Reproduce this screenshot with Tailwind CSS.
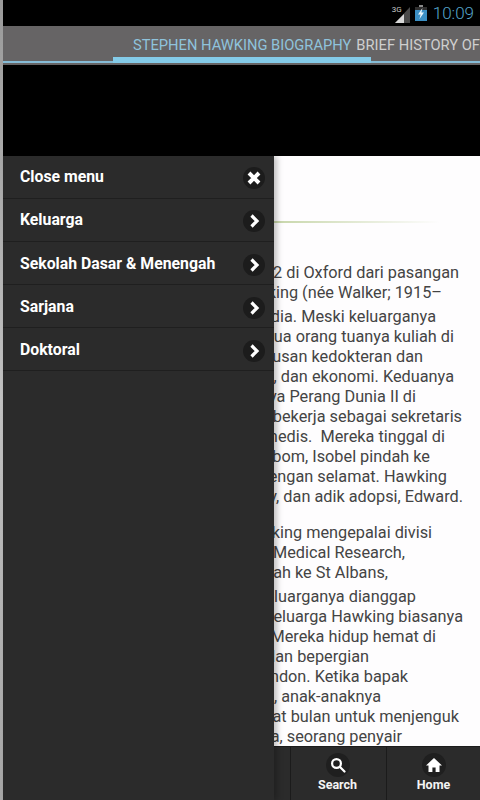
<!DOCTYPE html>
<html lang="en">
<head>
    <meta charset="UTF-8">
    <meta name="viewport" content="width=device-width, initial-scale=1.0">
    <title>Stephen Hawking Biography</title>
    <script src="https://cdn.jsdelivr.net/npm/@tailwindcss/browser@4"></script>
</head>
<body class="bg-black">
    <div class="relative flex h-[800px] w-[480px] overflow-hidden font-['Roboto',sans-serif]">
        <div class="w-[3px] shrink-0 bg-linear-to-b from-[#9a9a9a] via-[#c4c4c4] to-[#a8a8a8]"></div>

        <div class="flex min-w-0 flex-1 flex-col">
            <!-- status bar -->
            <div class="flex h-[26px] shrink-0 items-center justify-end bg-black pr-[6px]">
                <div class="relative mr-[5px] h-[20px] w-[18px]">
                    <span class="absolute left-0 top-[3px] text-[8px] leading-[8px] text-[#c8c8c8]">3G</span>
                    <svg class="absolute bottom-0 right-0" width="18" height="18" viewBox="0 0 18 18">
                        <path d="M18 2 L18 18 L3 18 Z" fill="#4a4a4a"/>
                        <path d="M12 9 L12 18 L3 18 Z" fill="#d8d8d8"/>
                    </svg>
                </div>
                <svg class="mr-[6px]" width="12" height="16" viewBox="0 0 12 16">
                    <rect x="4" y="0" width="4" height="2" fill="#8a8a8a"/>
                    <rect x="0" y="2" width="12" height="14" fill="#2f2f2f"/>
                    <rect x="0" y="5" width="12" height="11" fill="#3b8fc4"/>
                    <path d="M7.5 3 L3 9.5 L5.6 9.5 L4.5 14 L9 7.5 L6.4 7.5 Z" fill="#eaf6fc"/>
                </svg>
                <span class="text-[17px] font-light leading-none text-[#55a5ca]">10:09</span>
            </div>

            <!-- tab strip -->
            <div class="relative h-[39px] shrink-0 overflow-hidden bg-[#666465]">
                <div class="flex h-[38px] items-center whitespace-nowrap pl-[130px] text-[14.7px] text-[#cfcfcf]">
                    <span class="text-[#8fc3dc]">STEPHEN HAWKING BIOGRAPHY</span>
                    <span class="ml-[5px]">BRIEF HISTORY OF</span>
                </div>
                <div class="absolute inset-x-0 top-[35px] h-[2px] bg-[#86bcd6]"></div>
                <div class="absolute left-[110px] top-[31px] h-[6px] w-[258px] bg-[#84cbe8]"></div>
            </div>

            <div class="h-[91px] shrink-0 bg-black"></div>

            <!-- article -->
            <div class="min-h-0 flex-1 overflow-hidden bg-[#fefdfe] text-[16.3px] leading-[20px] text-[#444444]">
                <div class="ml-[17px] mt-[65px] h-[2px] w-[420px] bg-linear-to-r from-transparent via-[#b9cc94] to-transparent"></div>
                <div class="mt-[40px] whitespace-nowrap text-right">
                    <p class="pr-[21px]">1942 di Oxford dari pasangan</p>
                    <p class="pr-[38px]">Frank dan Isobel Hawking (née Walker; 1915–</p>
                    <p class="mt-1 pr-[44px]">2013) yang lahir di India. Meski keluarganya</p>
                    <p class="pr-[26px]">tidak kaya, kedua orang tuanya kuliah di</p>
                    <p class="pr-[57px]">Oxford, Frank jurusan kedokteran dan</p>
                    <p class="pr-[26px]">Isobel filsafat, politik, dan ekonomi. Keduanya</p>
                    <p class="pr-[64px]">bertemu setelah meletusnya Perang Dunia II di</p>
                    <p class="pr-[18px]">lembaga penelitian; Isobel bekerja sebagai sekretaris</p>
                    <p class="pr-[35px]">dan Frank peneliti medis.&nbsp; Mereka tinggal di</p>
                    <p class="pr-[50px]">Highgate, namun karena sering dibom, Isobel pindah ke</p>
                    <p class="pr-[33px]">Oxford untuk melahirkan dengan selamat. Hawking</p>
                    <p class="pr-[17px]">punya adik Philippa, Mary, dan adik adopsi, Edward.</p>
                </div>
                <div class="mt-4 whitespace-nowrap text-right">
                    <p class="pr-[48px]">Bapak Hawking mengepalai divisi</p>
                    <p class="pr-[75px]">parasitologi National Institute for Medical Research,</p>
                    <p class="pr-[92px]">lalu keluarganya pindah ke St Albans,</p>
                    <p class="mt-1 pr-[64px]">tempat tinggal keluarganya dianggap</p>
                    <p class="pr-[17px]">sangat eksentrik. Keluarga Hawking biasanya</p>
                    <p class="pr-[44px]">makan sambil membaca. Mereka hidup hemat di</p>
                    <p class="pr-[111px]">rumah besar tua dan bepergian</p>
                    <p class="pr-[72px]">dengan taksi bekas London. Ketika bapak</p>
                    <p class="pr-[99px]">bekerja di Afrika, anak-anaknya</p>
                    <p class="pr-[21px]">dan ibunya pergi empat bulan untuk menjenguk</p>
                    <p class="pr-[78px]">teman Isobel di Mallorca, seorang penyair</p>
                </div>
            </div>

            <!-- bottom actions -->
            <div class="flex h-[54px] shrink-0 justify-end border-t border-[#1c1c1c] bg-[#2b2b2b] text-[12.5px] font-bold text-[#f4f4f4]">
                <div class="flex w-[96px] flex-col items-center border-l border-[#1b1b1b] pr-[2px] pt-[6px]">
                    <div class="flex h-[24px] w-[24px] items-center justify-center rounded-full bg-[#1f1f1f]">
                        <svg width="16" height="16" viewBox="0 0 16 16" fill="none" stroke="#ffffff" stroke-width="2.2">
                            <circle cx="6.5" cy="6.5" r="4.4"/>
                            <path d="M10 10 L14.5 14.5" stroke-linecap="round"/>
                        </svg>
                    </div>
                    <span class="-mt-px leading-[18px]">Search</span>
                </div>
                <div class="flex w-[94px] flex-col items-center border-l border-[#1b1b1b] pt-[6px]">
                    <div class="flex h-[24px] w-[24px] items-center justify-center rounded-full bg-[#1f1f1f]">
                        <svg width="16" height="16" viewBox="0 0 16 16" fill="#ffffff">
                            <path d="M8 1 L16 8.5 L13.5 8.5 L13.5 15 L9.6 15 L9.6 10.5 L6.4 10.5 L6.4 15 L2.5 15 L2.5 8.5 L0 8.5 Z"/>
                        </svg>
                    </div>
                    <span class="-mt-px leading-[18px]">Home</span>
                </div>
            </div>
        </div>

        <!-- slide-out menu -->
        <div class="absolute bottom-0 left-[3px] top-[156px] w-[271px] bg-[#2b2b2b] text-[15.8px] font-bold text-white shadow-[3px_0_6px_rgba(0,0,0,0.25)]">
            <div class="flex h-[43px] items-center justify-between border-b border-[#1f1f1f] pl-[17px] pr-[9px]">
                <span>Close menu</span>
                <span class="mt-[2px] flex h-[22px] w-[22px] items-center justify-center rounded-full bg-[#1c1c1c]">
                    <svg width="14" height="14" viewBox="0 0 14 14" stroke="#ffffff" stroke-width="4"><path d="M2 2 L12 12 M12 2 L2 12"/></svg>
                </span>
            </div>
            <div class="flex h-[43px] items-center justify-between border-b border-[#1f1f1f] pl-[17px] pr-[9px]">
                <span>Keluarga</span>
                <span class="mt-[2px] flex h-[22px] w-[22px] items-center justify-center rounded-full bg-[#1c1c1c]">
                    <svg width="14" height="14" viewBox="0 0 14 14" fill="none" stroke="#ffffff" stroke-width="3.2"><path d="M4.5 1.5 L10 7 L4.5 12.5"/></svg>
                </span>
            </div>
            <div class="flex h-[43px] items-center justify-between border-b border-[#1f1f1f] pl-[17px] pr-[9px] pt-[2px]">
                <span>Sekolah Dasar &amp; Menengah</span>
                <span class="mt-[2px] flex h-[22px] w-[22px] items-center justify-center rounded-full bg-[#1c1c1c]">
                    <svg width="14" height="14" viewBox="0 0 14 14" fill="none" stroke="#ffffff" stroke-width="3.2"><path d="M4.5 1.5 L10 7 L4.5 12.5"/></svg>
                </span>
            </div>
            <div class="flex h-[43px] items-center justify-between border-b border-[#1f1f1f] pl-[17px] pr-[9px] pt-[2px]">
                <span>Sarjana</span>
                <span class="mt-[2px] flex h-[22px] w-[22px] items-center justify-center rounded-full bg-[#1c1c1c]">
                    <svg width="14" height="14" viewBox="0 0 14 14" fill="none" stroke="#ffffff" stroke-width="3.2"><path d="M4.5 1.5 L10 7 L4.5 12.5"/></svg>
                </span>
            </div>
            <div class="flex h-[43px] items-center justify-between border-b border-[#1f1f1f] pl-[17px] pr-[9px] pt-[2px]">
                <span>Doktoral</span>
                <span class="mt-[2px] flex h-[22px] w-[22px] items-center justify-center rounded-full bg-[#1c1c1c]">
                    <svg width="14" height="14" viewBox="0 0 14 14" fill="none" stroke="#ffffff" stroke-width="3.2"><path d="M4.5 1.5 L10 7 L4.5 12.5"/></svg>
                </span>
            </div>
        </div>
    </div>
</body>
</html>
